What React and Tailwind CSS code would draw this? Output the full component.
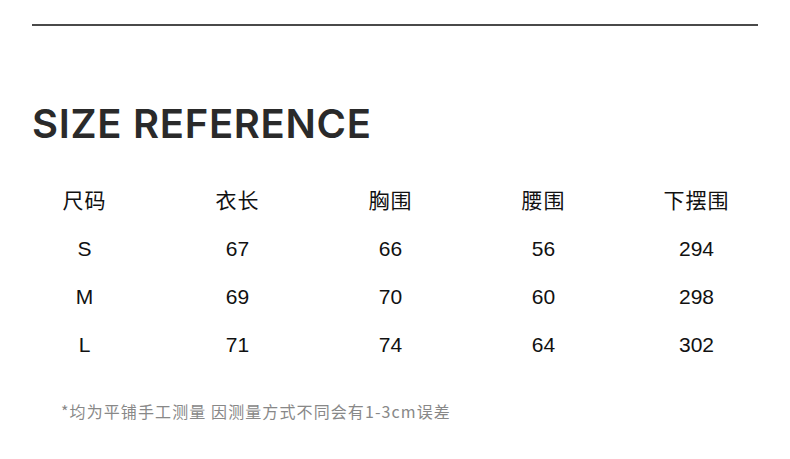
export default function App() {
  const rows = [
    ["S", "67", "66", "56", "294"],
    ["M", "69", "70", "60", "298"],
    ["L", "71", "74", "64", "302"],
  ];
  const head = ["尺码", "衣长", "胸围", "腰围", "下摆围"];
  const cjk = { fontFamily: '"Liberation Sans", "Noto Sans CJK SC", sans-serif' };
  return (
    <div className="w-[790px] h-[459px] bg-white overflow-hidden relative">
      <div className="pt-[24px] px-[32px]">
        <div className="h-[2px] bg-[#4a4a4a] w-[726px]" />
      </div>
      <div
        className="mt-[78px] ml-[32px] text-[40px] leading-[40px] font-semibold text-[#2a2a2a] tracking-[0.7px]"
        style={{ fontFamily: 'Inter, sans-serif' }}
      >
        SIZE REFERENCE
      </div>
      <div className="ml-[8px] w-[765px] mt-[33px] text-[#111] text-[21px]" style={cjk}>
        <div className="grid grid-cols-5 text-center h-[48px] items-center">
          {head.map((h) => (
            <div key={h} className="tracking-[1px]">{h}</div>
          ))}
        </div>
        {rows.map((r) => (
          <div key={r[0]} className="grid grid-cols-5 text-center h-[48px] items-center">
            {r.map((c, i) => (
              <div key={i}>{c}</div>
            ))}
          </div>
        ))}
      </div>
      <div
        className="mt-[30px] ml-[61px] text-[16px] text-[#888] tracking-[1.1px]"
        style={{ fontFamily: '"Noto Sans CJK SC", sans-serif' }}
      >
        *均为平铺手工测量 因测量方式不同会有1-3cm误差
      </div>
    </div>
  );
}
